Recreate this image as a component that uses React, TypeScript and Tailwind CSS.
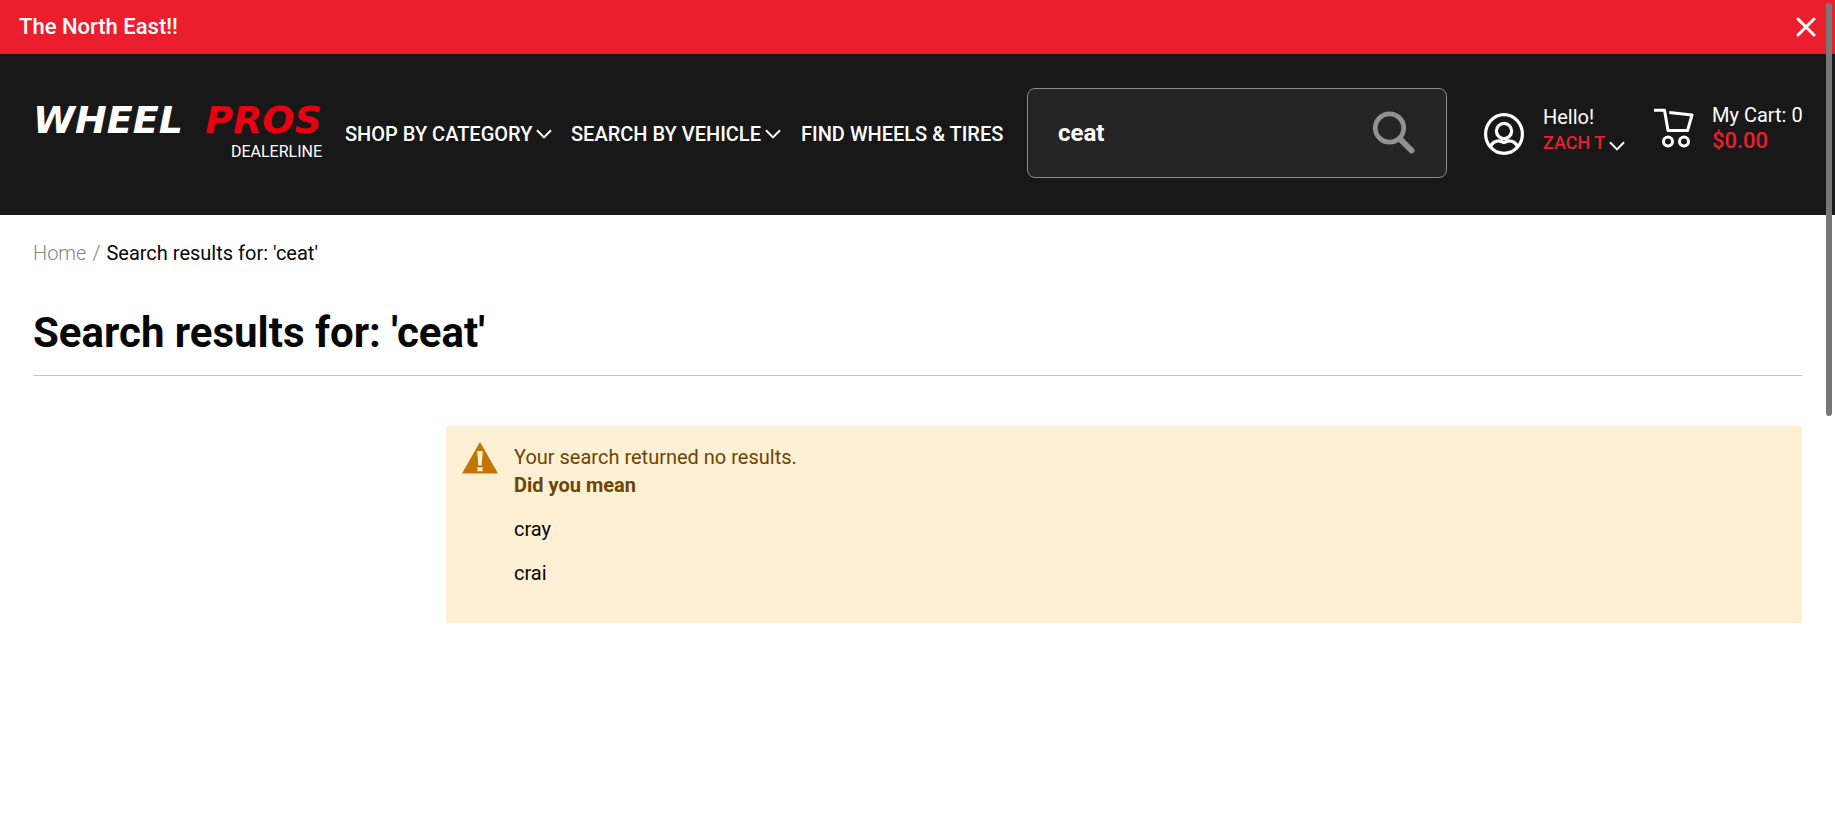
function Chevron() {
  return (
    <svg className="h-2.5 w-4 shrink-0" viewBox="0 0 16 10" fill="none" stroke="white" strokeWidth="2" aria-hidden="true">
      <path d="M1 1.2l7 7.2 7-7.2" />
    </svg>
  );
}

function SearchIcon() {
  return (
    <svg className="size-11" viewBox="0 0 44 44" fill="none" stroke="#919191" aria-hidden="true">
      <circle cx="17.5" cy="17" r="14.2" strokeWidth="4.8" />
      <path d="M28 28l11.5 11.5" strokeWidth="6" strokeLinecap="round" />
    </svg>
  );
}

function UserIcon() {
  return (
    <svg className="h-[42px] w-10 shrink-0" viewBox="0 0 40 42" fill="none" stroke="white" strokeWidth="3.2" aria-hidden="true">
      <ellipse cx="20" cy="21" rx="18.4" ry="19.4" />
      <circle cx="20" cy="18" r="7.6" />
      <path d="M6.5 33.5c1.5-3.500 5-5.700 8.500-5.700 1.600 0 3 1.500 5 1.500s3.400-1.500 5-1.500c3.500 0 7 2.200 8.500 5.700" />
    </svg>
  );
}

function CartIcon() {
  return (
    <svg className="size-10 shrink-0" viewBox="0 0 40 40" fill="none" stroke="white" strokeWidth="3" strokeLinejoin="round" aria-hidden="true">
      <path d="M0 2.200h10.500l3.500 20.400h19.500l4.500-15.600-22.700-2.600" />
      <circle cx="14" cy="33.500" r="4.500" />
      <circle cx="30" cy="33.500" r="4.500" />
    </svg>
  );
}

function WarningIcon() {
  return (
    <svg className="h-8 w-9 shrink-0" viewBox="0 0 36 32" aria-hidden="true">
      <path d="M18 0l18 31.500H0z" fill="#c07600" />
      <path d="M15.200 9h5.600l-1.100 14.500h-3.400zM15.500 25.200h5v4h-5z" fill="#fdf0d5" />
    </svg>
  );
}

export default function App() {
  return (
    <div className="relative min-h-screen bg-white font-['Roboto',sans-serif] text-[#070707]">
      <div className="flex h-[54px] items-center justify-between bg-[#eb1e2e] px-[19px] text-white">
        <p className="text-[22px] leading-8 font-medium">The North East!!</p>
        <button type="button" aria-label="Close">
          <svg className="size-5" viewBox="0 0 20 20" stroke="white" strokeWidth="3" strokeLinecap="round" aria-hidden="true">
            <path d="M2 2l16 16M18 2L2 18" />
          </svg>
        </button>
      </div>

      <header className="flex h-[161px] items-start bg-[#181818] px-[33px] pt-[34px] text-white">
        <a href="#" className="flex h-[84px] w-[289px] shrink-0 flex-col justify-center">
          <span className="flex justify-between font-['DejaVu_Sans',sans-serif] text-[38px] leading-11 font-bold italic">
            <span>WHEEL</span>
            <span className="text-[#e60012]">PROS</span>
          </span>
          <span className="text-right text-base leading-5">DEALERLINE</span>
        </a>
        <nav className="ml-[23px] flex h-[92px] shrink-0 items-center text-xl font-medium">
          <button type="button" className="flex w-[226px] items-center gap-1 whitespace-nowrap">
            SHOP BY CATEGORY
            <Chevron />
          </button>
          <button type="button" className="flex w-[230px] items-center gap-1 whitespace-nowrap">
            SEARCH BY VEHICLE
            <Chevron />
          </button>
          <a href="#" className="w-[226px] whitespace-nowrap">FIND WHEELS &amp; TIRES</a>
        </nav>
        <form className="flex h-[90px] min-w-0 flex-1 items-center rounded-lg border border-[#8c8c8c] bg-[#242424] pr-[30px] pl-[30px]">
          <input
            type="text"
            aria-label="Search"
            defaultValue="ceat"
            className="min-w-0 flex-1 bg-transparent text-2xl font-bold outline-none"
          />
          <button type="button" aria-label="Submit search">
            <SearchIcon />
          </button>
        </form>
        <button type="button" className="ml-[37px] flex h-[92px] w-[170px] shrink-0 items-center gap-[19px] text-left">
          <UserIcon />
          <span className="-mt-2 flex flex-col text-xl leading-[25px]">
            <span>Hello!</span>
            <span className="flex items-end gap-1 text-lg leading-[25px] font-medium whitespace-nowrap text-[#eb1e2e]">
              ZACH T
              <span className="pb-1">
                <Chevron />
              </span>
            </span>
          </span>
        </button>
        <a href="#" className="flex h-20 w-[148px] shrink-0 items-center gap-[18px] whitespace-nowrap">
          <CartIcon />
          <span className="flex flex-col text-xl leading-[26px]">
            <span>My Cart: 0</span>
            <span className="text-[22px] font-medium text-[#eb1e2e]">$0.00</span>
          </span>
        </a>
      </header>

      <main className="px-[33px] pt-6">
        <nav aria-label="Breadcrumb" className="flex gap-1.5 text-xl leading-7">
          <a href="#" className="font-light text-[#858585]">Home</a>
          <span className="font-light text-[#858585]">/</span>
          <span>Search results for: 'ceat'</span>
        </nav>
        <h1 className="mt-[38px] border-b border-[#c6c6c6] pb-3.5 text-[42px] leading-[56px] font-bold">
          Search results for: 'ceat'
        </h1>
        <section className="mt-[50px] ml-[413px] flex gap-4 bg-[#fdf0d5] px-4 pt-4 pb-9 text-xl leading-7">
          <WarningIcon />
          <div className="pt-px">
            <p className="text-[#6f4400]">Your search returned no results.</p>
            <p className="font-bold text-[#6f4400]">Did you mean</p>
            <ul className="mt-4 flex flex-col gap-4">
              <li><a href="#">cray</a></li>
              <li><a href="#">crai</a></li>
            </ul>
          </div>
        </section>
      </main>
      <div className="absolute top-[3px] right-[3px] h-[413px] w-1.5 rounded-full bg-[#777777]" />
    </div>
  );
}
